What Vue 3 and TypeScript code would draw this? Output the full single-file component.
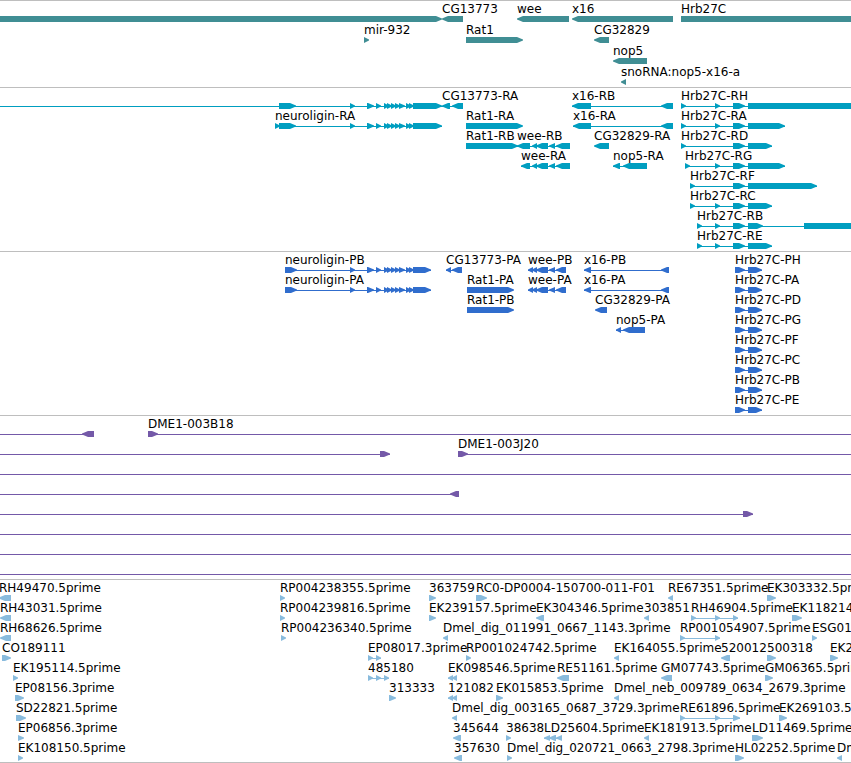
<script setup lang="ts">
type Strand = '+' | '-'
type Block = [start: number, end: number]

interface Feature {
  row: number
  label?: string
  strand: Strand
  blocks: Block[]
  span?: Block
}

interface Track {
  id: string
  pitch: number
  rows: number
  pad: number
  features: Feature[]
}

// Features that run past the visible window stop at these positions.
const LEFT = -20
const RIGHT = 4000
const TIP = 6

function f(row: number, label: string, strand: Strand, blocks: Block[], span?: Block): Feature {
  return { row, label, strand, blocks, span }
}

const neuroliginCore: Block[] = [
  [350, 355], [367, 374], [376, 381], [384, 389], [387, 392], [391, 396],
  [395, 400], [399, 405], [406, 411], [409, 414],
]
const weeCore: Block[] = [[532, 537], [536, 548], [549, 555]]

const genes: Feature[] = [
  f(0, '', '+', [[LEFT, 442]]),
  f(0, 'CG13773', '-', [[442, 463]]),
  f(0, 'wee', '-', [[517, 569]]),
  f(0, 'x16', '-', [[572, 673]]),
  f(0, 'Hrb27C', '+', [[681, RIGHT]]),
  f(1, 'mir-932', '+', [[364, 369]]),
  f(1, 'Rat1', '+', [[466, 523]]),
  f(1, 'CG32829', '-', [[594, 609]]),
  f(2, 'nop5', '-', [[613, 647]]),
  f(3, 'snoRNA:nop5-x16-a', '-', [[621, 626]]),
]

const transcripts: Feature[] = [
  f(0, '', '+', [[279, 296], ...neuroliginCore, [413, 442]], [LEFT, 442]),
  f(1, 'neuroligin-RA', '+', [[275, 280], [279, 296], ...neuroliginCore, [413, 442]]),
  f(0, 'CG13773-RA', '-', [[442, 450], [452, 463]]),
  f(1, 'Rat1-RA', '+', [[466, 523]]),
  f(2, 'Rat1-RB', '+', [[466, 518]]),
  f(2, 'wee-RB', '-', [[517, 530], ...weeCore, [556, 570]]),
  f(3, 'wee-RA', '-', [[521, 530], ...weeCore, [556, 570]]),
  f(0, 'x16-RB', '-', [[572, 591], [661, 673]]),
  f(1, 'x16-RA', '-', [[573, 591], [661, 673]]),
  f(2, 'CG32829-RA', '-', [[594, 609]]),
  f(3, 'nop5-RA', '-', [[613, 620], [623, 647]]),
  f(0, 'Hrb27C-RH', '+', [[681, 686], [715, 720], [733, 745], [748, RIGHT]]),
  f(1, 'Hrb27C-RA', '+', [[681, 686], [715, 720], [733, 745], [748, 785]]),
  f(2, 'Hrb27C-RD', '+', [[681, 686], [733, 745], [748, 772]]),
  f(3, 'Hrb27C-RG', '+', [[685, 690], [715, 720], [733, 745], [748, 785]]),
  f(4, 'Hrb27C-RF', '+', [[690, 695], [733, 745], [748, 817]]),
  f(5, 'Hrb27C-RC', '+', [[690, 695], [715, 720], [733, 745], [748, 772]]),
  f(6, 'Hrb27C-RB', '+', [[697, 702], [715, 720], [733, 745], [748, 763], [804, RIGHT]]),
  f(7, 'Hrb27C-RE', '+', [[697, 702], [715, 720], [733, 745], [748, 772]]),
]

const proteins: Feature[] = [
  f(0, 'neuroligin-PB', '+', [[285, 297], ...neuroliginCore, [413, 431]]),
  f(1, 'neuroligin-PA', '+', [[285, 297], ...neuroliginCore, [413, 431]]),
  f(0, 'CG13773-PA', '-', [[446, 451], [452, 462]]),
  f(1, 'Rat1-PA', '+', [[467, 514]]),
  f(2, 'Rat1-PB', '+', [[467, 514]]),
  f(0, 'wee-PB', '-', [[528, 533], ...weeCore, [556, 566]]),
  f(1, 'wee-PA', '-', [[528, 533], ...weeCore, [556, 566]]),
  f(0, 'x16-PB', '-', [[584, 591], [661, 669]]),
  f(1, 'x16-PA', '-', [[584, 591], [661, 669]]),
  f(2, 'CG32829-PA', '-', [[595, 607]]),
  f(3, 'nop5-PA', '-', [[616, 621], [623, 645]]),
  ...['PH', 'PA', 'PD', 'PG', 'PF', 'PC', 'PB', 'PE'].map((name, row) =>
    f(row, `Hrb27C-${name}`, '+', [[735, 745], [748, 762]]),
  ),
]

const clones: Feature[] = [
  f(0, '', '-', [[82, 94]], [LEFT, 94]),
  f(0, 'DME1-003B18', '+', [[148, 158]], [148, RIGHT]),
  f(1, '', '+', [[380, 390]], [LEFT, 390]),
  f(1, 'DME1-003J20', '+', [[458, 468]], [458, RIGHT]),
  f(2, '', '+', [], [LEFT, RIGHT]),
  f(3, '', '-', [[450, 459]], [LEFT, 459]),
  f(4, '', '+', [[743, 753]], [LEFT, 753]),
  f(5, '', '+', [], [LEFT, RIGHT]),
  f(6, '', '+', [], [LEFT, RIGHT]),
  f(7, '', '+', [], [LEFT, RIGHT]),
]

const reads: Feature[] = [
  f(0, 'RH49470.5prime', '-', [[-1, 11]]),
  f(0, 'RP004238355.5prime', '+', [[280, 285]]),
  f(0, '363759', '+', [[429, 436]]),
  f(0, 'RC0-DP0004-150700-011-F01', '+', [[476, 487]]),
  f(0, 'RE67351.5prime', '-', [[668, 673]]),
  f(0, 'EK303332.5prime', '+', [[767, 776]]),

  f(1, 'RH43031.5prime', '-', [[0, 11]]),
  f(1, 'RP004239816.5prime', '+', [[280, 285]]),
  f(1, 'EK239157.5prime', '+', [[429, 436]]),
  f(1, 'EK304346.5prime', '-', [[536, 544]]),
  f(1, '303851', '-', [[644, 649]]),
  f(1, 'RH46904.5prime', '+', [[691, 696], [715, 720], [733, 738]]),
  f(1, 'EK118214.5prime', '+', [[792, 802]]),

  f(2, 'RH68626.5prime', '-', [[0, 11]]),
  f(2, 'RP004236340.5prime', '+', [[281, 286]]),
  f(2, 'Dmel_dig_011991_0667_1143.3prime', '-', [[443, 448]]),
  f(2, 'RP001054907.5prime', '+', [[680, 685], [715, 720]]),
  f(2, 'ESG01', '+', [[812, 817]]),

  f(3, 'CO189111', '+', [[2, 11]]),
  f(3, 'EP08017.3prime', '+', [[368, 373], [376, 381]]),
  f(3, 'RP001024742.5prime', '+', [[466, 471]]),
  f(3, 'EK164055.5prime', '-', [[614, 619]]),
  f(3, '520012', '-', [[721, 730]]),
  f(3, '500318', '+', [[767, 776]]),
  f(3, 'EK2', '+', [[830, 838]]),

  f(4, 'EK195114.5prime', '+', [[13, 18]]),
  f(4, '485180', '+', [[368, 373], [376, 381], [384, 389]]),
  f(4, 'EK098546.5prime', '-', [[448, 453], [452, 457]]),
  f(4, 'RE51161.5prime', '-', [[557, 569]]),
  f(4, 'GM07743.5prime', '-', [[661, 672]]),
  f(4, 'GM06365.5prime', '+', [[765, 773]]),

  f(5, 'EP08156.3prime', '+', [[15, 24]]),
  f(5, '313333', '+', [[389, 396]]),
  f(5, '121082', '-', [[448, 453], [452, 457]]),
  f(5, 'EK015853.5prime', '+', [[496, 503]]),
  f(5, 'Dmel_neb_009789_0634_2679.3prime', '-', [[614, 619]]),

  f(6, 'SD22821.5prime', '+', [[16, 26]]),
  f(6, 'Dmel_dig_003165_0687_3729.3prime', '-', [[452, 457]]),
  f(6, 'RE61896.5prime', '+', [[680, 685], [715, 720], [733, 740]]),
  f(6, 'EK269103.5prime', '+', [[779, 787]]),

  f(7, 'EP06856.3prime', '+', [[18, 24]]),
  f(7, '345644', '-', [[453, 461]]),
  f(7, '38638', '+', [[506, 511]]),
  f(7, 'LD25604.5prime', '-', [[544, 550], [549, 556], [556, 562]]),
  f(7, 'EK181913.5prime', '-', [[644, 649]]),
  f(7, 'LD11469.5prime', '+', [[752, 763]]),

  f(8, 'EK108150.5prime', '+', [[18, 23]]),
  f(8, '357630', '-', [[454, 462]]),
  f(8, 'Dmel_dig_020721_0663_2798.3prime', '+', [[507, 512]]),
  f(8, 'HL02252.5prime', '+', [[735, 744]]),
  f(8, 'Dm', '-', [[837, 842]]),
]

const tracks: Track[] = [
  { id: 'genes', pitch: 21, rows: 4, pad: 2, features: genes },
  { id: 'transcripts', pitch: 20, rows: 8, pad: 3, features: transcripts },
  { id: 'proteins', pitch: 20, rows: 8, pad: 3, features: proteins },
  { id: 'clones', pitch: 20, rows: 8, pad: 3, features: clones },
  { id: 'reads', pitch: 20, rows: 9, pad: 2, features: reads },
]

function extent(feature: Feature): Block {
  if (feature.span) return feature.span
  return [feature.blocks[0][0], feature.blocks[feature.blocks.length - 1][1]]
}

// A bar whose leading end narrows to a point in the direction of the strand.
function arrow([start, end]: Block, strand: Strand): string {
  const tip = Math.min(TIP, end - start)
  return strand === '+'
    ? `M${start} 15H${end - tip}L${end} 17.5V18.5L${end - tip} 21H${start}Z`
    : `M${end} 15H${start + tip}L${start} 17.5V18.5L${start + tip} 21H${end}Z`
}
</script>

<template>
  <main class="browser">
    <section v-for="track in tracks" :key="track.id" class="track" :class="track.id">
      <svg class="canvas" width="100%" :height="track.rows * track.pitch + track.pad">
        <g
          v-for="(feature, i) in track.features"
          :key="i"
          :transform="`translate(0 ${feature.row * track.pitch})`"
        >
          <rect
            v-if="feature.blocks.length !== 1 || feature.span"
            class="glyph"
            :x="extent(feature)[0]"
            y="18"
            :width="extent(feature)[1] - extent(feature)[0]"
            height="1"
          />
          <path v-for="(block, b) in feature.blocks" :key="b" class="glyph" :d="arrow(block, feature.strand)" />
          <text v-if="feature.label" class="label" :x="extent(feature)[0]" y="12">{{ feature.label }}</text>
        </g>
      </svg>
    </section>
  </main>
</template>

<style scoped>
.browser {
  width: 100%;
  overflow: hidden;
  background: #ffffff;
  border-bottom: 1px solid #bebebe;
}

.track {
  border-top: 1px solid #bebebe;
}

.canvas {
  display: block;
  overflow: hidden;
}

.label {
  font-family: "DejaVu Sans", Verdana, sans-serif;
  font-size: 12px;
  fill: #000000;
}

.genes .glyph {
  fill: #408e94;
}

.transcripts .glyph {
  fill: #009ec0;
}

.proteins .glyph {
  fill: #306dcd;
}

.clones .glyph {
  fill: #7459a8;
}

.reads .glyph {
  fill: #89bbdd;
}
</style>

<style>
body {
  background: #ffffff;
}
</style>
